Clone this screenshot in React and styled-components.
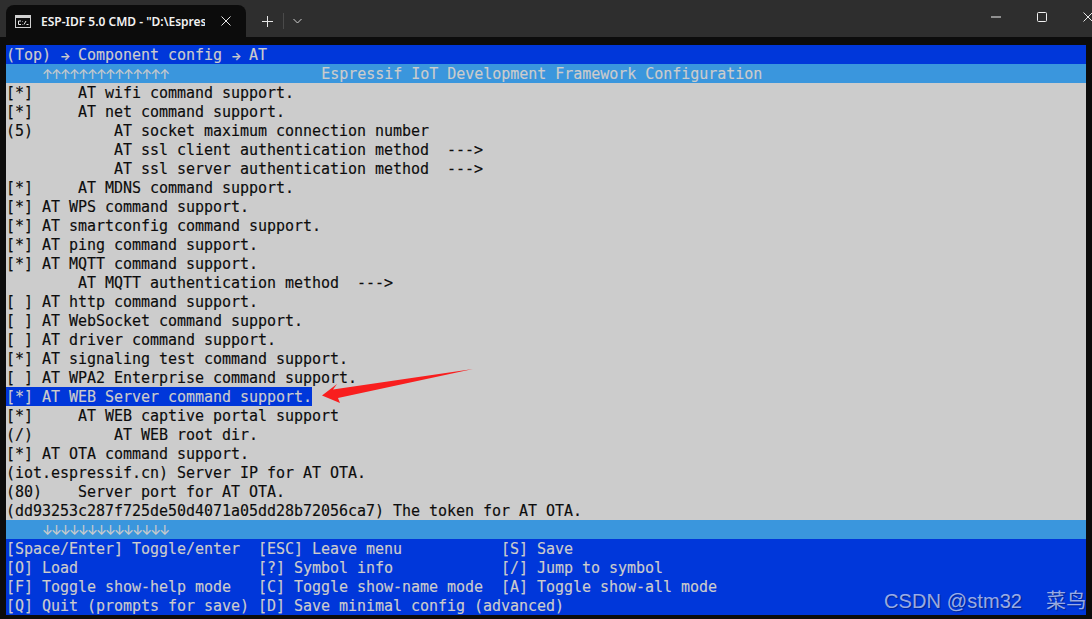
import styled, { createGlobalStyle } from "styled-components";

const Global = createGlobalStyle`
  html, body { margin: 0; padding: 0; background: #0c0c0c; overflow: hidden; }
`;

const Window = styled.div`
  position: relative;
  width: 1092px;
  height: 619px;
  overflow: hidden;
  background: #0c0c0c;
`;

const TitleBar = styled.div`
  display: flex;
  align-items: flex-end;
  height: 37px;
  padding-left: 6px;
  background: #2e2e2e;
  color: #fff;
`;

const Tab = styled.div`
  display: flex;
  align-items: center;
  width: 240px;
  height: 32px;
  box-sizing: border-box;
  padding: 0 15px 0 9px;
  background: #0c0c0c;
  border-radius: 8px 8px 0 0;
`;

const TabTitle = styled.span`
  width: 164px;
  margin-left: 10px;
  overflow: hidden;
  white-space: pre;
  font: 600 12px "Noto Sans", "Open Sans", sans-serif;
  color: #f2f2f2;
`;

const TabClose = styled.span`
  display: flex;
  margin-left: auto;
`;

const TabActions = styled.div`
  display: flex;
  align-items: center;
  height: 32px;
  margin-left: 16px;
`;

const Divider = styled.div`
  width: 1px;
  height: 16px;
  margin: 0 9px 0 10px;
  background: #4a4a4a;
`;

const WindowButtons = styled.div`
  display: flex;
  align-items: center;
  gap: 36px;
  height: 34px;
  margin-left: auto;
  margin-right: -1px;
  align-self: flex-start;
`;

const Terminal = styled.div`
  width: 1080px;
  margin: 8px 0 0 6px;
  font: 15px/21px "DejaVu Sans Mono", monospace;
  letter-spacing: -0.03px;
  -webkit-text-stroke: 0.15px currentColor;
`;

const Line = styled.div`
  height: 19px;
  white-space: pre;
  background: ${(p) => p.$bg};
  color: #cccccc;
`;

const ListArea = styled.div`
  background: #cccccc;
  color: #0c0c0c;
`;

const Row = styled.div`
  height: 19px;
  white-space: pre;
`;

const Selected = styled.span`
  display: inline-block;
  height: 19px;
  background: #0037da;
  color: #cccccc;
`;

const BlueArea = styled.div`
  background: #0037da;
  color: #cccccc;
`;

// the terminal's arrows are heavier than the mono font's, 9px per cell
const ScrollArrows = styled.span`
  font-family: Inter, sans-serif;
  font-size: 13px;
  letter-spacing: -1.83px;
`;

const PathArrow = styled.span`
  font-family: Inter, sans-serif;
  font-size: 11px;
  font-weight: 600;
  letter-spacing: -1.5px;
`;

const ArrowOverlay = styled.svg`
  position: absolute;
  left: 318px;
  top: 366px;
`;

const Watermark = styled.div`
  position: absolute;
  left: 884px;
  top: 588px;
  display: flex;
  gap: 24px;
  white-space: pre;
  font: 20px/26px "Liberation Sans", "Noto Sans CJK SC", sans-serif;
  letter-spacing: 0.1px;
  color: rgba(255, 255, 255, 0.62);
  text-shadow: 1px 1px 1px rgba(0, 0, 0, 0.35);
`;

const listRows = [
  "[*]     AT wifi command support.",
  "[*]     AT net command support.",
  "(5)         AT socket maximum connection number",
  "            AT ssl client authentication method  --->",
  "            AT ssl server authentication method  --->",
  "[*]     AT MDNS command support.",
  "[*] AT WPS command support.",
  "[*] AT smartconfig command support.",
  "[*] AT ping command support.",
  "[*] AT MQTT command support.",
  "        AT MQTT authentication method  --->",
  "[ ] AT http command support.",
  "[ ] AT WebSocket command support.",
  "[ ] AT driver command support.",
  "[*] AT signaling test command support.",
  "[ ] AT WPA2 Enterprise command support.",
  "[*] AT WEB Server command support.",
  "[*]     AT WEB captive portal support",
  "(/)         AT WEB root dir.",
  "[*] AT OTA command support.",
  "(iot.espressif.cn) Server IP for AT OTA.",
  "(80)    Server port for AT OTA.",
  "(dd93253c287f725de50d4071a05dd28b72056ca7) The token for AT OTA.",
];

const helpRows = [
  "[Space/Enter] Toggle/enter  [ESC] Leave menu           [S] Save",
  "[O] Load                    [?] Symbol info            [/] Jump to symbol",
  "[F] Toggle show-help mode   [C] Toggle show-name mode  [A] Toggle show-all mode",
  "[Q] Quit (prompts for save) [D] Save minimal config (advanced)",
];

function CmdIcon() {
  return (
    <svg width="16" height="13" viewBox="0 0 16 13">
      <rect x="0.5" y="0.5" width="15" height="12" fill="#0c0c0c" stroke="#d0d0d0" />
      <rect x="1" y="1" width="14" height="2" fill="#d0d0d0" />
      <path d="M6 6H3.5V9.5H6M7.5 6.5V7M7.5 9V9.5M9 9.5L11 6M11.5 9.5H13.5" stroke="#e8e8e8" fill="none" />
    </svg>
  );
}

function CloseIcon() {
  return (
    <svg width="10" height="10" viewBox="0 0 10 10">
      <path d="M0.5 0.5L9.5 9.5M9.5 0.5L0.5 9.5" stroke="#e6e6e6" strokeWidth="1" fill="none" />
    </svg>
  );
}

function PlusIcon() {
  return (
    <svg width="11" height="11" viewBox="0 0 11 11">
      <path d="M5.5 0V11M0 5.5H11" stroke="#e6e6e6" strokeWidth="1" fill="none" />
    </svg>
  );
}

function ChevronIcon() {
  return (
    <svg width="9" height="6" viewBox="0 0 9 6">
      <path d="M0.5 1L4.5 5L8.5 1" stroke="#d0d0d0" strokeWidth="1" fill="none" />
    </svg>
  );
}

function MinimizeIcon() {
  return (
    <svg width="10" height="2" viewBox="0 0 10 2">
      <path d="M0 1H10" stroke="#f0f0f0" strokeWidth="1" fill="none" />
    </svg>
  );
}

function MaximizeIcon() {
  return (
    <svg width="10" height="10" viewBox="0 0 10 10">
      <rect x="0.5" y="0.5" width="9" height="9" rx="1" stroke="#f0f0f0" fill="none" />
    </svg>
  );
}

export default function App() {
  return (
    <Window>
      <Global />
      <TitleBar>
        <Tab>
          <CmdIcon />
          <TabTitle>ESP-IDF 5.0 CMD - "D:\Espres</TabTitle>
          <TabClose>
            <CloseIcon />
          </TabClose>
        </Tab>
        <TabActions>
          <PlusIcon />
          <Divider />
          <ChevronIcon />
        </TabActions>
        <WindowButtons>
          <MinimizeIcon />
          <MaximizeIcon />
          <CloseIcon />
        </WindowButtons>
      </TitleBar>
      <Terminal>
        <Line $bg="#0037da">
          (Top) <PathArrow>→</PathArrow> Component config <PathArrow>→</PathArrow> AT
        </Line>
        <Line $bg="#3a96dd">
          {"    "}
          <ScrollArrows>↑↑↑↑↑↑↑↑↑↑↑↑↑↑</ScrollArrows>
          {"                 Espressif IoT Development Framework Configuration"}
        </Line>
        <ListArea>
          {listRows.map((text) => (
            <Row key={text}>
              {text.startsWith("[*] AT WEB Server") ? <Selected>{text}</Selected> : text}
            </Row>
          ))}
        </ListArea>
        <Line $bg="#3a96dd">
          {"    "}
          <ScrollArrows>↓↓↓↓↓↓↓↓↓↓↓↓↓↓</ScrollArrows>
        </Line>
        <BlueArea>
          {helpRows.map((text) => (
            <Row key={text}>{text}</Row>
          ))}
        </BlueArea>
      </Terminal>
      <ArrowOverlay width="160" height="44" viewBox="0 0 160 44">
        <path d="M4 29.5L19 18L15 23.5L155 3L20 32L22 37Z" fill="#f81e1e" />
      </ArrowOverlay>
      <Watermark>
        <span>CSDN @stm32</span>
        <span>菜鸟</span>
      </Watermark>
    </Window>
  );
}
